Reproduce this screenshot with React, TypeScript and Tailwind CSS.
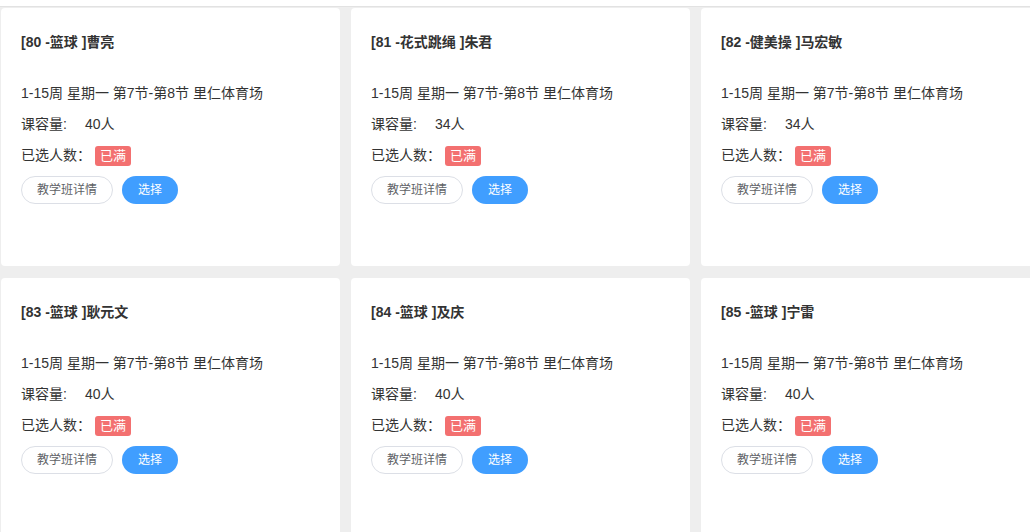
const courses = [
  { id: 80, sport: "篮球", teacher: "曹亮", cap: 40 },
  { id: 81, sport: "花式跳绳", teacher: "朱君", cap: 34 },
  { id: 82, sport: "健美操", teacher: "马宏敏", cap: 34 },
  { id: 83, sport: "篮球", teacher: "耿元文", cap: 40 },
  { id: 84, sport: "篮球", teacher: "及庆", cap: 40 },
  { id: 85, sport: "篮球", teacher: "宁雷", cap: 40 },
]

function CourseCard({ course }: { course: (typeof courses)[number] }) {
  return (
    <div className="h-[258px] w-[339px] shrink-0 rounded-[4px] bg-white pl-[20px] pt-[24px]">
      <div className="h-[20px] text-[14px] font-bold leading-[20px] text-[#333]">
        [{course.id} -{course.sport} ]{course.teacher}
      </div>
      <div className="mt-[26px] text-[14px] text-[#333]">
        <div className="flex h-[31px] items-center">1-15周 星期一 第7节-第8节 里仁体育场</div>
        <div className="flex h-[31px] items-center">
          <span>课容量:</span>
          <span className="ml-[18px]">{course.cap}人</span>
        </div>
        <div className="flex h-[31px] items-center">
          <span>已选人数：</span>
          <span className="ml-[4px] flex h-[20px] w-[36px] items-center justify-center rounded-[3px] bg-[#f37070] text-[13px] text-white">
            已满
          </span>
        </div>
      </div>
      <div className="mt-[5px] flex gap-[9px]">
        <button className="h-[28px] w-[92px] rounded-full border border-[#dcdfe6] bg-white text-[12px] text-[#606266]">
          教学班详情
        </button>
        <button className="h-[28px] w-[56px] rounded-full bg-[#409eff] text-[12px] text-white">选择</button>
      </div>
    </div>
  )
}

export default function App() {
  return (
    <div
      className="h-[532px] w-[1030px] overflow-hidden bg-white"
      style={{ fontFamily: '"Liberation Sans", "Noto Sans CJK SC", sans-serif' }}
    >
      <div className="mt-[6px] h-full border-t border-[#e2e2e2] bg-[#eeeeee] pl-[1px] pt-[1px]">
        <div className="flex w-[1100px] flex-wrap gap-x-[11px] gap-y-[12px]">
          {courses.map((c) => (
            <CourseCard key={c.id} course={c} />
          ))}
        </div>
      </div>
    </div>
  )
}
